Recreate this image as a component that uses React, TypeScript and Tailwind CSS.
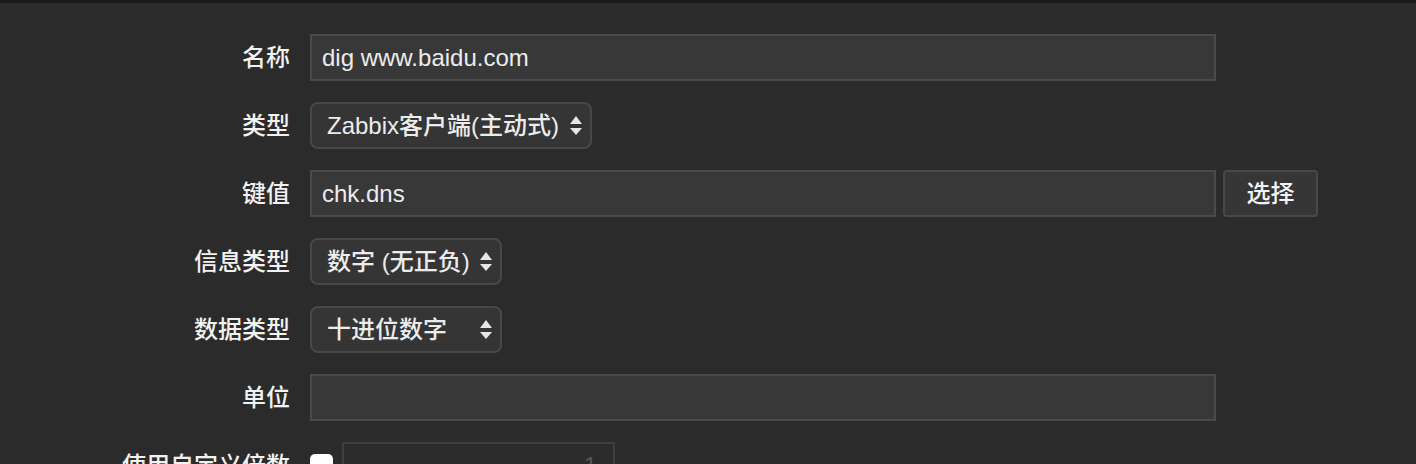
const font = { fontFamily: '"Liberation Sans", "Noto Sans CJK SC", sans-serif' };

function Arrows() {
  return (
    <svg width="12" height="20" viewBox="0 0 12 20" className="shrink-0">
      <path d="M6 0 L12 8 L0 8 Z" fill="#e6e6e6" />
      <path d="M0 12 L12 12 L6 19 Z" fill="#e6e6e6" />
    </svg>
  );
}

function Label({ children }: { children: React.ReactNode }) {
  return (
    <div className="w-[291px] shrink-0 pr-[1px] text-right text-[24px] font-medium text-[#f2f2f2]">
      {children}
    </div>
  );
}

function TextInput({ value, width = 'w-[906px]' }: { value?: string; width?: string }) {
  return (
    <div
      className={`${width} h-[47px] flex items-center pl-[10px] border-2 border-[#4a4a4a] bg-[#383838] text-[24px] text-[#ececec]`}
    >
      {value}
    </div>
  );
}

function Select({ value, width }: { value: string; width: string }) {
  return (
    <div
      className={`${width} h-[47px] flex items-center justify-between pl-[15px] pr-[8px] rounded-[8px] border-2 border-[#484848] bg-[#353535] text-[24px] font-medium text-[#ececec]`}
    >
      <span className="whitespace-nowrap">{value}</span>
      <Arrows />
    </div>
  );
}

export default function App() {
  return (
    <div className="w-[1416px] h-[464px] overflow-hidden bg-[#2b2b2b]" style={font}>
      <div className="h-[3px] bg-[#1a1a1a]" />
      <div className="pt-[31px] flex flex-col gap-[21px]">
        <div className="flex items-center gap-[19px]">
          <Label>名称</Label>
          <TextInput value="dig www.baidu.com" />
        </div>
        <div className="flex items-center gap-[19px]">
          <Label>类型</Label>
          <Select value="Zabbix客户端(主动式)" width="w-[282px]" />
        </div>
        <div className="flex items-center gap-[19px]">
          <Label>键值</Label>
          <div className="flex items-center gap-[7px]">
            <TextInput value="chk.dns" />
            <button className="w-[95px] h-[47px] rounded-[4px] border-2 border-[#484848] bg-[#363636] text-[24px] font-medium text-[#f2f2f2]">
              选择
            </button>
          </div>
        </div>
        <div className="flex items-center gap-[19px]">
          <Label>信息类型</Label>
          <Select value="数字 (无正负)" width="w-[192px]" />
        </div>
        <div className="flex items-center gap-[19px]">
          <Label>数据类型</Label>
          <Select value="十进位数字" width="w-[192px]" />
        </div>
        <div className="flex items-center gap-[19px]">
          <Label>单位</Label>
          <TextInput />
        </div>
        <div className="flex items-center gap-[19px]">
          <Label>使用自定义倍数</Label>
          <div className="flex items-center gap-[9px]">
            <div className="w-[23px] h-[23px] rounded-[5px] bg-white" />
            <div className="w-[273px] h-[47px] flex items-center justify-end pr-[16px] border-2 border-[#3f3f3f] bg-[#2b2b2b] text-[24px] text-[#555]">
              1
            </div>
          </div>
        </div>
      </div>
    </div>
  );
}
